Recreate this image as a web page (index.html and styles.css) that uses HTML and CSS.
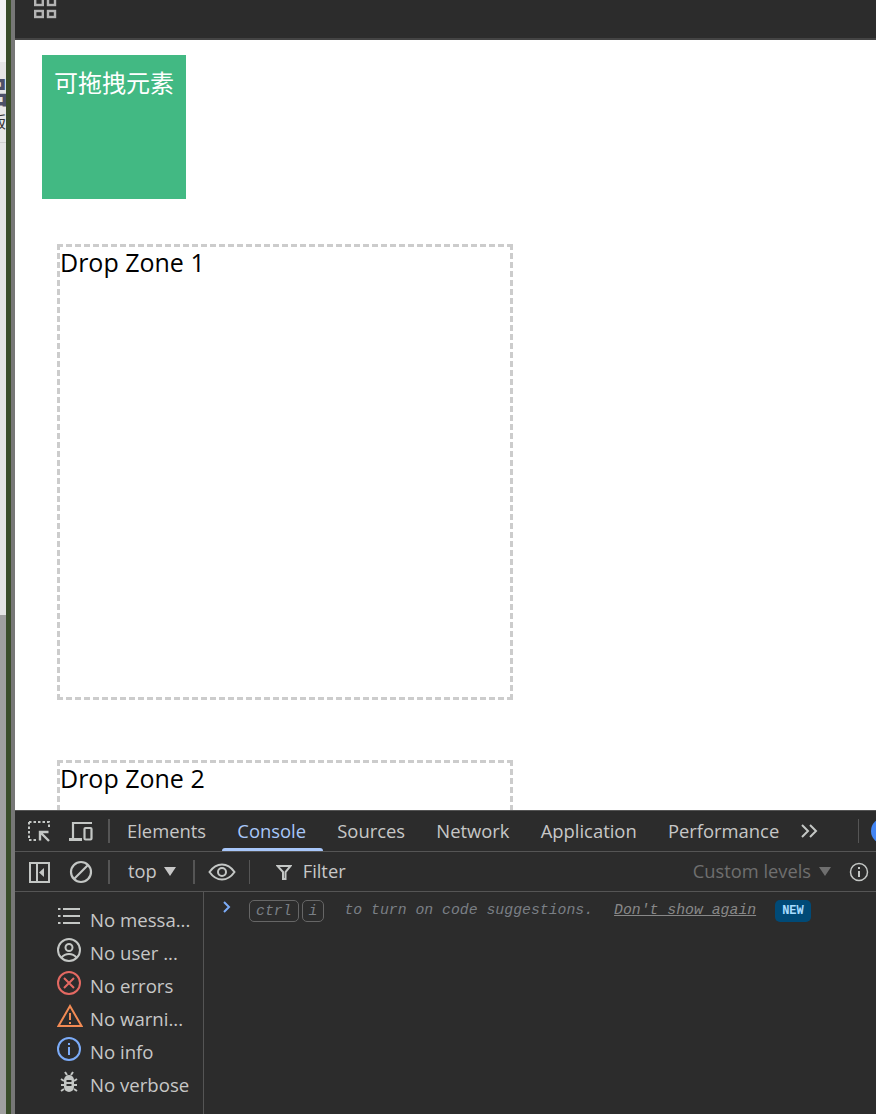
FILE: index.html
```html
<!DOCTYPE html>
<html lang="zh">
<head>
<meta charset="utf-8">
<title>Drag and drop</title>
<link rel="stylesheet" href="styles.css">
</head>
<body>
<div class="behind">
  <div class="behind-top"></div>
  <div class="behind-card"><span class="glyph-big">吕</span><span class="glyph-small">版</span></div>
  <div class="behind-mid"></div>
  <div class="behind-low"></div>
</div>
<div class="edge-green"></div>
<div class="edge-gray"></div>
<div class="window">
  <header class="topbar">
    <svg class="grid-icon" width="24" height="24" viewBox="0 0 24 24" fill="none" stroke="#b4b4b4" stroke-width="2.400"><rect x="1.200" y="-4" width="7.600" height="9"/><rect x="14" y="-4" width="7" height="9"/><rect x="1.200" y="11" width="7.600" height="6"/><rect x="14" y="11" width="7" height="6"/></svg>
  </header>
  <main class="page">
    <div class="draggable">可拖拽元素</div>
    <div class="zone">Drop Zone 1</div>
    <div class="zone">Drop Zone 2</div>
  </main>
  <section class="devtools">
    <div class="tabs">
      <svg class="ic ic-inspect" width="24" height="24" viewBox="0 0 24 24" fill="none" stroke="#c4c7c5" stroke-width="2"><path d="M2 3h20v7M2 3v18h8" stroke-dasharray="2.500 2"/><path d="M14 14l8 8M13 21.500v-8.500h8.500" stroke-width="2.400"/></svg>
      <svg class="ic ic-device" width="26" height="24" viewBox="0 0 26 24" fill="none" stroke="#c4c7c5" stroke-width="2.200"><path d="M5 19V4h19"/><path d="M1 20.500h13" stroke-width="3"/><rect x="16.500" y="9" width="7" height="11.500" rx="1"/></svg>
      <span class="sep"></span>
      <span class="tab">Elements</span>
      <span class="tab active">Console</span>
      <span class="tab">Sources</span>
      <span class="tab">Network</span>
      <span class="tab">Application</span>
      <span class="tab">Performance</span>
      <svg class="more" width="20" height="16" viewBox="0 0 20 16" fill="none" stroke="#c4c7c5" stroke-width="2"><path d="M2 2l6 6-6 6M10 2l6 6-6 6"/></svg>
      <span class="sep sep-right"></span>
      <span class="avatar"></span>
    </div>
    <div class="toolbar">
      <svg class="ic" width="22" height="22" viewBox="0 0 22 22" fill="none" stroke="#c4c7c5" stroke-width="2"><rect x="2" y="2" width="19" height="19"/><path d="M9 2v19"/><path d="M16 7v9l-5-4.500z" fill="#c4c7c5" stroke="none"/></svg>
      <svg class="ic ic-block" width="24" height="24" viewBox="0 0 24 24" fill="none" stroke="#c4c7c5" stroke-width="2.200"><circle cx="12" cy="12" r="10"/><path d="M5 19L19 5"/></svg>
      <span class="sep"></span>
      <span class="ctx">top</span>
      <span class="caret"></span>
      <span class="sep"></span>
      <svg class="ic ic-eye" width="28" height="18" viewBox="0 0 28 18" fill="none" stroke="#c4c7c5" stroke-width="2"><path d="M1.500 9C5 4 9 1.500 14 1.500S23 4 26.500 9C23 14 19 16.500 14 16.500S5 14 1.500 9z"/><circle cx="14" cy="9" r="4"/></svg>
      <span class="sep sep-thin"></span>
      <svg class="ic ic-filter" width="16" height="16" viewBox="0 0 16 16" fill="none" stroke="#c4c7c5" stroke-width="2"><path d="M1.500 2h13L9.500 8v7h-2.500V8z"/></svg>
      <span class="filter">Filter</span>
      <span class="levels">Custom levels</span>
      <span class="caret caret-dim"></span>
      <svg class="ic ic-info" width="20" height="20" viewBox="0 0 20 20" fill="none" stroke="#c4c7c5" stroke-width="1.500"><circle cx="10" cy="10" r="8.500"/><path d="M10 9v6M10 5v2" stroke-width="2"/></svg>
    </div>
    <div class="console">
      <aside class="sidebar">
        <div class="row"><svg width="24" height="24" viewBox="0 0 24 24" fill="none" stroke="#c4c7c5" stroke-width="2.200"><path d="M6 4h17M6 11h17M6 18h17"/><path d="M1 4h2.500M1 11h2.500M1 18h2.500"/></svg><span>No messa...</span></div>
        <div class="row"><svg width="24" height="24" viewBox="0 0 24 24" fill="none" stroke="#c4c7c5" stroke-width="2"><circle cx="12" cy="12" r="11"/><circle cx="12" cy="9.500" r="3.500"/><path d="M4.500 19.500C7 16.500 9.500 16 12 16s5 .5 7.500 3.500"/></svg><span>No user ...</span></div>
        <div class="row"><svg width="24" height="24" viewBox="0 0 24 24" fill="none" stroke="#e46962" stroke-width="2"><circle cx="12" cy="12" r="11"/><path d="M7 7l10 10M17 7L7 17"/></svg><span>No errors</span></div>
        <div class="row"><svg width="26" height="24" viewBox="0 0 26 24" fill="none" stroke="#f28b54" stroke-width="2"><path d="M13 2L1.500 22h23z"/><path d="M13 9v7M13 18v2"/></svg><span class="warn-label">No warni...</span></div>
        <div class="row"><svg width="24" height="24" viewBox="0 0 24 24" fill="none" stroke="#7cacf8" stroke-width="2"><circle cx="12" cy="12" r="11"/><path d="M12 10v8M12 6v2"/></svg><span>No info</span></div>
        <div class="row"><svg width="24" height="24" viewBox="0 0 24 24" fill="none" stroke="#c4c7c5" stroke-width="2"><path d="M8 2l2 3M16 2l-2 3M4 9l3 2M20 9l-3 2M4 15h3M20 15h-3M4 21l3-2M20 21l-3-2"/><rect x="7" y="5" width="10" height="17" rx="5" fill="#c4c7c5" stroke="none"/><path d="M9.500 11h5M9.500 15h5" stroke="#2c2c2c"/></svg><span>No verbose</span></div>
      </aside>
      <div class="prompt">
        <svg class="chev" width="10" height="14" viewBox="0 0 10 14" fill="none" stroke="#7cacf8" stroke-width="2"><path d="M2 2l5 5-5 5"/></svg>
        <span class="key key-ctrl">ctrl</span><span class="key key-i">i</span>
        <span class="hint">to turn on code suggestions.</span>
        <span class="dismiss">Don't show again</span>
        <span class="new">NEW</span>
      </div>
    </div>
  </section>
</div>
</body>
</html>
```
FILE: styles.css
```css
* { box-sizing: border-box; }
html, body { margin: 0; height: 100%; }
body {
  display: flex;
  width: 876px;
  height: 1114px;
  overflow: hidden;
  font-family: "Open Sans", "Noto Sans CJK SC", sans-serif;
  background: #fff;
}
.behind {
  width: 6px;
  flex: none;
  display: flex;
  flex-direction: column;
  overflow: hidden;
  background: #e6e6e6;
}
.behind-top { height: 62px; background: #f4f4f4; flex: none; }
.behind-card {
  height: 81px;
  flex: none;
  position: relative;
  overflow: hidden;
  background: #e6e6e6;
  border-bottom: 1px solid #cfcfcf;
}
.glyph-big { position: absolute; left: -20px; top: 13px; font-family: "Noto Sans CJK SC", sans-serif; font-size: 30px; font-weight: 700; color: #4c5068; line-height: 30px; }
.glyph-small { position: absolute; left: -10px; top: 49px; font-family: "Noto Sans CJK SC", sans-serif; font-size: 16px; color: #333; line-height: 20px; }
.behind-mid { height: 472px; flex: none; background: #e4e4e4; }
.behind-low { flex: 1; background: #a0a0a0; }
.edge-green { width: 5px; flex: none; background: #3a4d2a; }
.edge-gray { width: 4px; flex: none; background: #777; }

.window { flex: 1; min-width: 0; display: flex; flex-direction: column; }
.topbar {
  height: 40px;
  flex: none;
  background: #2c2c2c;
  border-bottom: 2px solid #444;
  padding-left: 19px;
}
.grid-icon { display: block; }

.page { flex: 1; min-height: 0; overflow: hidden; background: #fff; padding: 15px 0 0 27px; }
.draggable {
  width: 144px;
  height: 144px;
  background: #42b983;
  color: #fff;
  font-size: 24px;
  line-height: 30px;
  text-align: center;
  padding-top: 12px;
  font-family: "Noto Sans CJK SC", sans-serif;
}
.zone {
  width: 456px;
  height: 456px;
  margin: 45px 0 60px 15px;
  border: 3px dashed #ccc;
  font-size: 25px;
  line-height: 30px;
  color: #000;
}

.devtools {
  height: 304px;
  flex: none;
  background: #2c2c2c;
  border-top: 1px solid #555;
  display: flex;
  flex-direction: column;
  color: #c7c7c7;
  font-size: 18.400px;
}
.tabs {
  height: 41px;
  flex: none;
  display: flex;
  align-items: center;
  padding-left: 12px;
  border-bottom: 1px solid #555;
  overflow: hidden;
}
.ic { flex: none; display: block; }
.ic-device { margin-left: 17px; }
.sep { width: 2px; height: 24px; background: #555; flex: none; margin: 0 17px 0 14px; }
.tab { position: relative; height: 40px; line-height: 39px; margin-right: 31.200px; flex: none; white-space: nowrap; }
.tab.active { color: #a8c7fa; }
.tab.active::after {
  content: "";
  position: absolute;
  left: -15px;
  right: -17px;
  bottom: 0;
  height: 3px;
  background: #a8c7fa;
  border-radius: 3px 3px 0 0;
}
.more { margin-left: -10px; flex: none; }
.sep-right { width: 1px; margin: 0 12px 0 38px; }
.avatar { width: 26px; height: 26px; border-radius: 50%; background: #4285f4; flex: none; }

.toolbar {
  height: 40px;
  flex: none;
  display: flex;
  align-items: center;
  padding-left: 13px;
  border-bottom: 1px solid #555;
  font-size: 18.300px;
}
.ic-block { margin-left: 19px; }
.toolbar .sep { margin: 0 18px 0 15px; }
.ctx { color: #c7c7c7; margin-bottom: 2px; }
.caret {
  width: 0;
  height: 0;
  margin-left: 7px;
  border-left: 6px solid transparent;
  border-right: 6px solid transparent;
  border-top: 9px solid #c7c7c7;
  flex: none;
}
.toolbar .caret + .sep { margin: 0 13px 0 17px; }
.sep-thin { width: 1px; }
.toolbar .sep-thin { margin: 0 26px 0 13px; }
.filter { margin-left: 11px; margin-bottom: 2px; }
.levels { margin-left: auto; margin-bottom: 2px; color: #6f6f6f; }
.caret-dim { border-top-color: #6f6f6f; margin-left: 8px; }
.ic-info { margin: 0 7px 0 18px; }

.console { flex: 1; min-height: 0; display: flex; }
.sidebar {
  width: 189px;
  flex: none;
  border-right: 1px solid #555;
  padding: 15px 0 0 42px;
  display: flex;
  flex-direction: column;
  gap: 9px;
}
.row { display: flex; align-items: center; height: 24px; white-space: nowrap; color: #c7c7c7; font-size: 18.600px; }
.row svg { flex: none; margin-right: 9px; position: relative; top: -2px; }
.row .warn-label { margin-left: -2px; }
.prompt {
  flex: 1;
  display: flex;
  align-items: flex-start;
  font-family: "Liberation Mono", monospace;
  font-style: italic;
  font-size: 14.800px;
  color: #7a7f85;
  padding: 8px 0 0 18px;
  white-space: nowrap;
}
.chev { flex: none; margin-right: 17px; }
.key {
  height: 22px;
  line-height: 20px;
  border: 1px solid #666;
  border-radius: 5px;
  padding: 0 6px;
  margin-right: 3px;
}
.hint { margin: 0 21px 0 17px; line-height: 20px; }
.dismiss { text-decoration: underline; line-height: 20px; color: #888; }
.new {
  margin-left: 19px;
  height: 22px;
  line-height: 22px;
  padding: 0 7px;
  border-radius: 5px;
  background: #004a77;
  color: #a8dcff;
  font-size: 12px;
  font-weight: 700;
  font-style: normal;
}
```
